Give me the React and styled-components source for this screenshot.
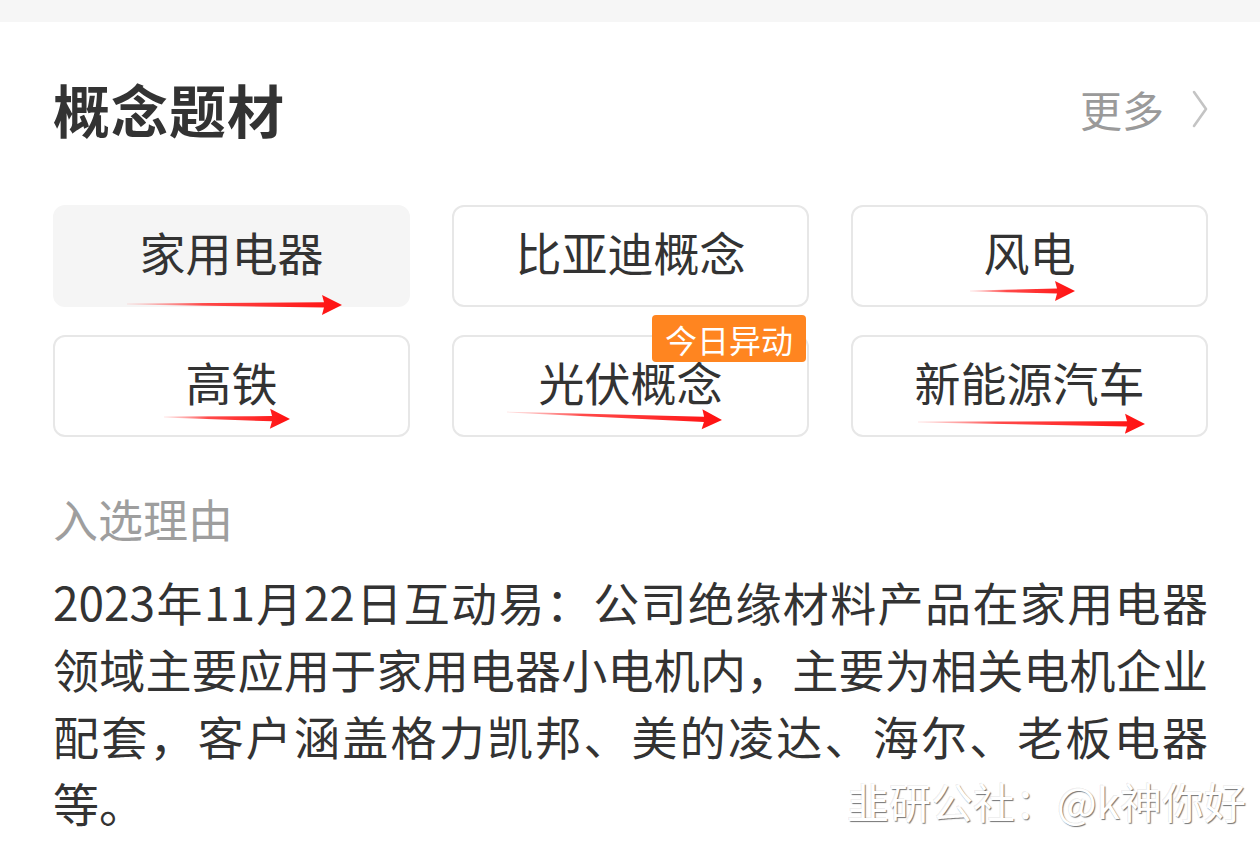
import React from "react";
import styled, { createGlobalStyle } from "styled-components";

const Global = createGlobalStyle`
  html, body { margin: 0; padding: 0; background: #ffffff; }
  body { font-family: "Noto Sans CJK SC", "Noto Sans", sans-serif; color: #333333; }
`;

const Page = styled.div`
  position: relative;
  width: 1260px;
  height: 846px;
  overflow: hidden;
  background: #ffffff;
`;

const TopBand = styled.div`
  height: 22px;
  background: #f6f6f6;
`;

const Section = styled.div`
  padding: 0 52px 0 53px;
`;

const Header = styled.div`
  margin-top: 53px;
  height: 66px;
  display: flex;
  align-items: center;
  justify-content: space-between;
`;

const Title = styled.h2`
  margin: 0;
  font-size: 57px;
  font-weight: 700;
  color: #333333;
  line-height: 66px;
  letter-spacing: 1px;
`;

const More = styled.div`
  display: flex;
  align-items: center;
  gap: 28px;
  font-size: 42px;
  color: #9a9a9a;
  line-height: 66px;
  margin-top: 2px;
`;

const Grid = styled.div`
  margin-top: 64px;
  display: grid;
  grid-template-columns: repeat(3, 357px);
  grid-auto-rows: 102px;
  column-gap: 42px;
  row-gap: 28px;
`;

const Tile = styled.div`
  position: relative;
  box-sizing: border-box;
  display: flex;
  align-items: center;
  justify-content: center;
  border-radius: 12px;
  font-size: 46px;
  color: #333333;
  background: ${(p) => (p.$active ? "#f5f5f5" : "#ffffff")};
  border: 2px solid ${(p) => (p.$active ? "#f5f5f5" : "#e7e7e7")};
  padding-bottom: 10px;
`;

const Badge = styled.div`
  position: absolute;
  top: -22px;
  right: 1px;
  height: 47px;
  padding: 0 13px;
  display: flex;
  align-items: center;
  background: #ff8520;
  color: #ffffff;
  font-size: 32px;
  border-radius: 4px;
  line-height: 1;
  z-index: 2;
`;

const ArrowSvg = styled.svg`
  position: absolute;
  left: ${(p) => p.$x}px;
  top: ${(p) => p.$y - 12}px;
  transform-origin: 0 12px;
  overflow: visible;
  z-index: 3;
`;

const Label = styled.div`
  margin-top: 49px;
  font-size: 45px;
  line-height: 66px;
  color: #9e9e9e;
`;

const Body = styled.p`
  margin: 16px 0 0 0;
  width: 1155px;
  font-size: 46px;
  line-height: 67px;
  color: #333333;
  text-align: justify;
`;

const Watermark = styled.div`
  position: absolute;
  right: 14px;
  bottom: 15px;
  font-size: 42px;
  color: #ffffff;
  text-shadow: 1px 1px 1px rgba(0, 0, 0, 0.55), -1px -1px 0 rgba(0, 0, 0, 0.08);
`;

let gid = 0;
function Arrow({ from, to }) {
  const dx = to[0] - from[0];
  const dy = to[1] - from[1];
  const L = Math.sqrt(dx * dx + dy * dy);
  const ang = (Math.atan2(dy, dx) * 180) / Math.PI;
  const hl = 18;
  const id = `ag${gid++}`;
  const d = `M0,11.6 L${L - hl},9.4 L${L - hl - 2},2 L${L},12 L${L - hl - 2},22 L${L - hl},14.6 L0,12.4 Z`;
  return (
    <ArrowSvg
      $x={from[0]}
      $y={from[1]}
      width={L}
      height={24}
      viewBox={`0 0 ${L} 24`}
      style={{ transform: `rotate(${ang}deg)` }}
    >
      <defs>
        <linearGradient id={id} x1="0" y1="0" x2="1" y2="0">
          <stop offset="0" stopColor="#ff6060" stopOpacity="0.15" />
          <stop offset="0.35" stopColor="#ff2a2a" stopOpacity="0.85" />
          <stop offset="1" stopColor="#ff1010" />
        </linearGradient>
      </defs>
      <path d={d} fill={`url(#${id})`} />
    </ArrowSvg>
  );
}

function Chevron() {
  return (
    <svg width="16" height="38" viewBox="0 0 16 38">
      <polyline points="2,2 14,19 2,36" fill="none" stroke="#c4c4c4" strokeWidth="2.6" strokeLinecap="round" strokeLinejoin="round" />
    </svg>
  );
}

const tiles = [
  { name: "家用电器", active: true, arrow: [[72, 97], [287, 98]] },
  { name: "比亚迪概念" },
  { name: "风电", arrow: [[117, 84], [222, 84]] },
  { name: "高铁", arrow: [[109, 80], [235, 82]] },
  { name: "光伏概念", badge: "今日异动", arrow: [[53, 75], [268, 83]] },
  { name: "新能源汽车", arrow: [[65, 85], [292, 87]] },
];

export default function App() {
  return (
    <Page>
      <Global />
      <TopBand />
      <Section>
        <Header>
          <Title>概念题材</Title>
          <More>
            更多
            <Chevron />
          </More>
        </Header>
        <Grid>
          {tiles.map((t) => (
            <Tile key={t.name} $active={t.active}>
              {t.name}
              {t.badge && <Badge>{t.badge}</Badge>}
              {t.arrow && <Arrow from={t.arrow[0]} to={t.arrow[1]} />}
            </Tile>
          ))}
        </Grid>
        <Label>入选理由</Label>
        <Body>
          2023年11月22日互动易：公司绝缘材料产品在家用电器领域主要应用于家用电器小电机内，主要为相关电机企业配套，客户涵盖格力凯邦、美的凌达、海尔、老板电器等。
        </Body>
      </Section>
      <Watermark>韭研公社：@k神你好</Watermark>
    </Page>
  );
}
